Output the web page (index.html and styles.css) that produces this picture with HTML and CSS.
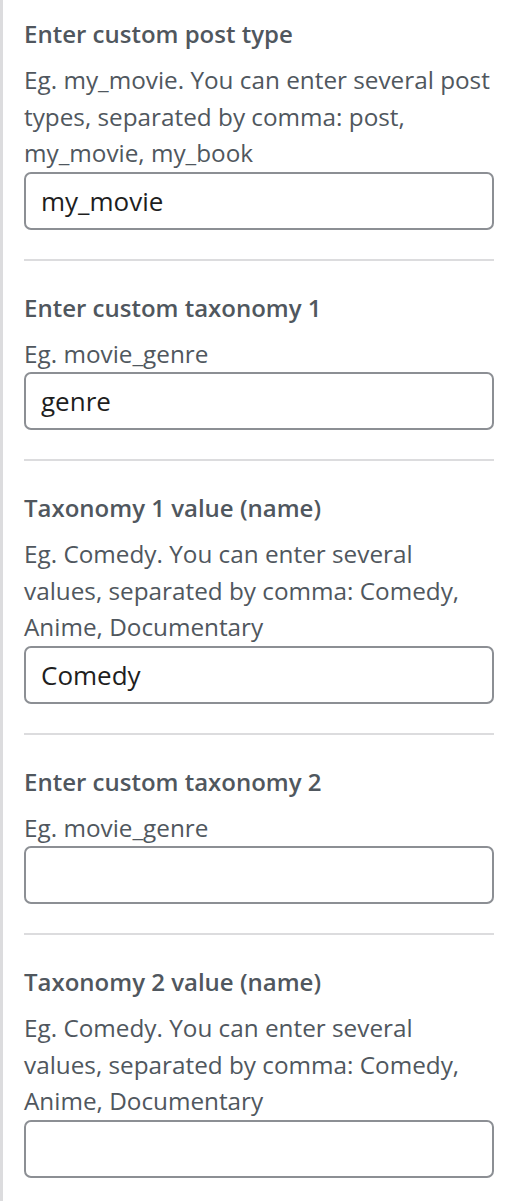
FILE: index.html
```html
<!DOCTYPE html>
<html lang="en">
<head>
  <meta charset="UTF-8" /><meta name="viewport" content="width=device-width, initial-scale=1.0" />
  <title>Custom post type settings</title>
  <link rel="stylesheet" href="styles.css">
</head>
<body>
  <div class="panel">
    <div class="field">
      <label class="field-title" for="postType">Enter custom post type</label>
      <p class="help">Eg. my_movie. You can enter several post types, separated by comma: post, my_movie, my_book</p>
      <input type="text" id="postType" value="my_movie" />
    </div>

    <div class="field">
      <label class="field-title" for="tax1">Enter custom taxonomy 1</label>
      <p class="help">Eg. movie_genre</p>
      <input type="text" id="tax1" value="genre" />
    </div>

    <div class="field">
      <label class="field-title" for="tax1Value">Taxonomy 1 value (name)</label>
      <p class="help">Eg. Comedy. You can enter several values, separated by comma: Comedy, Anime, Documentary</p>
      <input type="text" id="tax1Value" value="Comedy" />
    </div>

    <div class="field">
      <label class="field-title" for="tax2">Enter custom taxonomy 2</label>
      <p class="help">Eg. movie_genre</p>
      <input type="text" id="tax2" value="" />
    </div>

    <div class="field">
      <label class="field-title" for="tax2Value">Taxonomy 2 value (name)</label>
      <p class="help">Eg. Comedy. You can enter several values, separated by comma: Comedy, Anime, Documentary</p>
      <input type="text" id="tax2Value" value="" />
    </div>
  </div>
</body>
</html>
```

FILE: styles.css
```css
body { margin: 0; background: #fff; font-family: "Open Sans", "Noto Sans", sans-serif; color: #50575e; }
.panel { border-left: 3px solid #dcdcde; padding: 0 15px 23px 21px; min-height: 1178px; }
.field { border-top: 2px solid #dcdcde; padding: 32px 0 29px; }
.field:first-child { border-top: none; padding-top: 19px; }
.field-title { display: block; font-size: 24px; font-weight: 600; line-height: 30px; margin-bottom: 13px; }
.help { margin: 0; font-size: 24.3px; line-height: 36.5px; }
input { display: block; box-sizing: border-box; width: 100%; height: 58px; margin: 0; padding: 0 15px; border: 2px solid #8c8f94; border-radius: 7px; font-family: inherit; font-size: 26px; color: #1e1e1e; background: #fff; }
```
